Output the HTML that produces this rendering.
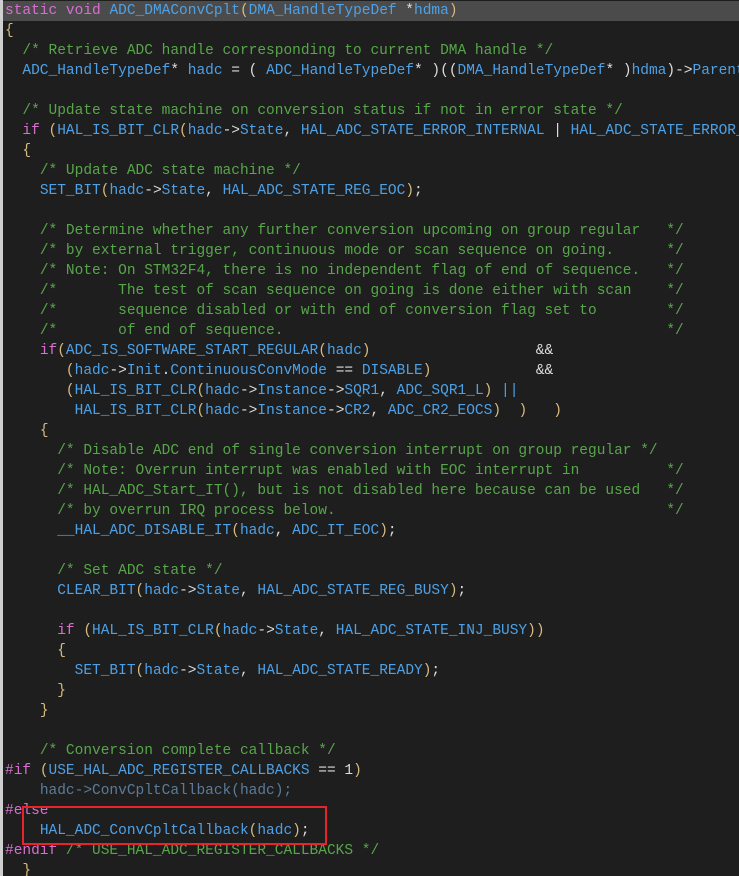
<!DOCTYPE html>
<html><head><meta charset="utf-8"><style>
html,body{margin:0;padding:0;background:#1e1e1e;width:739px;height:876px;overflow:hidden;position:relative}
.g{position:absolute;left:0;top:0;width:3px;height:876px;background:#cfcfcf}
.hl{position:absolute;left:3px;top:1px;width:736px;height:20px;background:#4b4b4b}
pre{position:absolute;left:5px;top:1px;margin:0;font-family:"Liberation Mono",monospace;font-size:14.5px;line-height:20px;color:#dcdcdc;white-space:pre}
.k{color:#d86fd0}.i{color:#4ea1e6}.c{color:#57a64a}.p{color:#d7ba7d}.d{color:#5c7b9a}.o{color:#dcdcdc}
.box{position:absolute;left:22px;top:806px;width:305px;height:39px;border:2px solid #e8232a;box-sizing:border-box}
</style></head><body>
<div class="g"></div><div class="hl"></div>
<pre><span class="k">static</span> <span class="k">void</span> <span class="i">ADC_DMAConvCplt</span><span class="p">(</span><span class="i">DMA_HandleTypeDef</span> *<span class="i">hdma</span><span class="p">)</span>
<span class="p">{</span>
  <span class="c">/* Retrieve ADC handle corresponding to current DMA handle */</span>
  <span class="i">ADC_HandleTypeDef</span>* <span class="i">hadc</span> = ( <span class="i">ADC_HandleTypeDef</span>* )((<span class="i">DMA_HandleTypeDef</span>* )<span class="i">hdma</span>)-&gt;<span class="i">Parent</span>;

  <span class="c">/* Update state machine on conversion status if not in error state */</span>
  <span class="k">if</span> <span class="p">(</span><span class="i">HAL_IS_BIT_CLR</span><span class="p">(</span><span class="i">hadc</span>-&gt;<span class="i">State</span>, <span class="i">HAL_ADC_STATE_ERROR_INTERNAL</span> | <span class="i">HAL_ADC_STATE_ERROR_DMA</span>))
  <span class="p">{</span>
    <span class="c">/* Update ADC state machine */</span>
    <span class="i">SET_BIT</span><span class="p">(</span><span class="i">hadc</span>-&gt;<span class="i">State</span>, <span class="i">HAL_ADC_STATE_REG_EOC</span><span class="p">)</span>;

    <span class="c">/* Determine whether any further conversion upcoming on group regular   */</span>
    <span class="c">/* by external trigger, continuous mode or scan sequence on going.      */</span>
    <span class="c">/* Note: On STM32F4, there is no independent flag of end of sequence.   */</span>
    <span class="c">/*       The test of scan sequence on going is done either with scan    */</span>
    <span class="c">/*       sequence disabled or with end of conversion flag set to        */</span>
    <span class="c">/*       of end of sequence.                                            */</span>
    <span class="k">if</span><span class="p">(</span><span class="i">ADC_IS_SOFTWARE_START_REGULAR</span><span class="p">(</span><span class="i">hadc</span><span class="p">)</span>                   &amp;&amp;
       <span class="p">(</span><span class="i">hadc</span>-&gt;<span class="i">Init</span>.<span class="i">ContinuousConvMode</span> == <span class="i">DISABLE</span><span class="p">)</span>            &amp;&amp;
       <span class="p">(</span><span class="i">HAL_IS_BIT_CLR</span><span class="p">(</span><span class="i">hadc</span>-&gt;<span class="i">Instance</span>-&gt;<span class="i">SQR1</span>, <span class="i">ADC_SQR1_L</span><span class="p">)</span> <span class="i">||</span>
        <span class="i">HAL_IS_BIT_CLR</span><span class="p">(</span><span class="i">hadc</span>-&gt;<span class="i">Instance</span>-&gt;<span class="i">CR2</span>, <span class="i">ADC_CR2_EOCS</span><span class="p">)</span>  <span class="p">)</span>   <span class="p">)</span>
    <span class="p">{</span>
      <span class="c">/* Disable ADC end of single conversion interrupt on group regular */</span>
      <span class="c">/* Note: Overrun interrupt was enabled with EOC interrupt in          */</span>
      <span class="c">/* HAL_ADC_Start_IT(), but is not disabled here because can be used   */</span>
      <span class="c">/* by overrun IRQ process below.                                      */</span>
      <span class="i">__HAL_ADC_DISABLE_IT</span><span class="p">(</span><span class="i">hadc</span>, <span class="i">ADC_IT_EOC</span><span class="p">)</span>;

      <span class="c">/* Set ADC state */</span>
      <span class="i">CLEAR_BIT</span><span class="p">(</span><span class="i">hadc</span>-&gt;<span class="i">State</span>, <span class="i">HAL_ADC_STATE_REG_BUSY</span><span class="p">)</span>;

      <span class="k">if</span> <span class="p">(</span><span class="i">HAL_IS_BIT_CLR</span><span class="p">(</span><span class="i">hadc</span>-&gt;<span class="i">State</span>, <span class="i">HAL_ADC_STATE_INJ_BUSY</span><span class="p">))</span>
      <span class="p">{</span>
        <span class="i">SET_BIT</span><span class="p">(</span><span class="i">hadc</span>-&gt;<span class="i">State</span>, <span class="i">HAL_ADC_STATE_READY</span><span class="p">)</span>;
      <span class="p">}</span>
    <span class="p">}</span>

    <span class="c">/* Conversion complete callback */</span>
<span class="k">#if</span> <span class="p">(</span><span class="i">USE_HAL_ADC_REGISTER_CALLBACKS</span> == 1<span class="p">)</span>
    <span class="d">hadc-&gt;ConvCpltCallback(hadc);</span>
<span class="k">#else</span>
    <span class="i">HAL_ADC_ConvCpltCallback</span><span class="p">(</span><span class="i">hadc</span><span class="p">)</span>;
<span class="k">#endif</span> <span class="c">/* USE_HAL_ADC_REGISTER_CALLBACKS */</span>
  <span class="p">}</span></pre>
<div class="box"></div>
</body></html>
